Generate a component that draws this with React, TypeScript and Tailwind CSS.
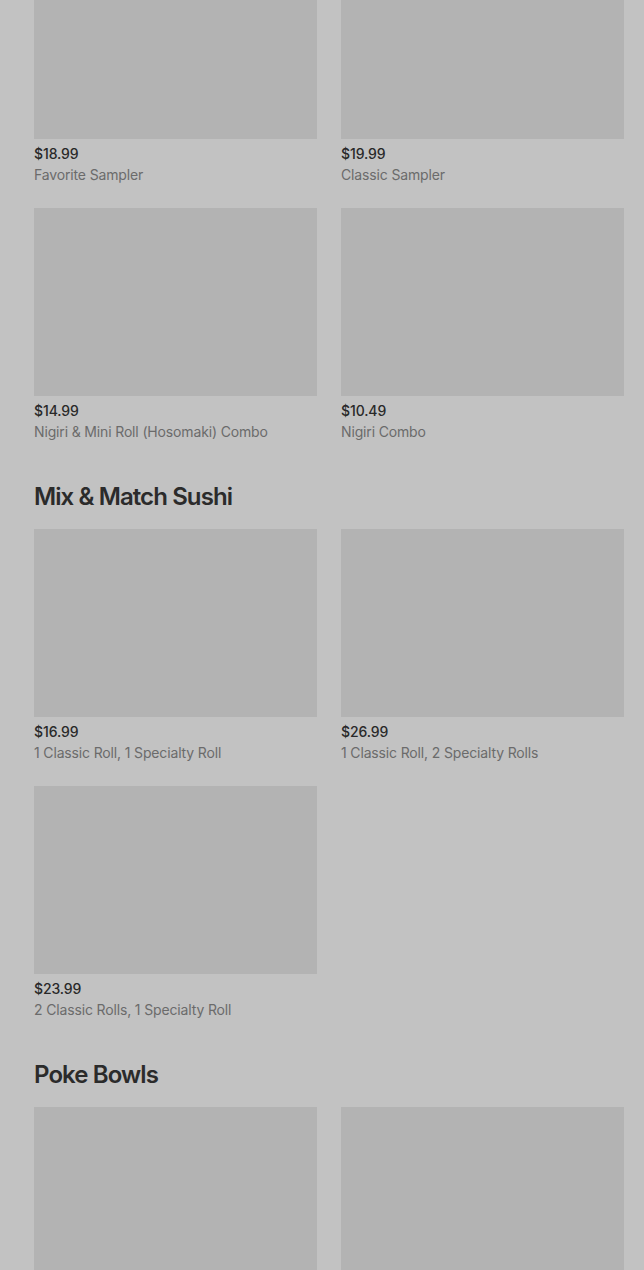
import React from "react";

type Item = { price: string; name: string };

const sections: { title?: string; items: Item[] }[] = [
  {
    items: [
      { price: "$18.99", name: "Favorite Sampler" },
      { price: "$19.99", name: "Classic Sampler" },
      { price: "$14.99", name: "Nigiri & Mini Roll (Hosomaki) Combo" },
      { price: "$10.49", name: "Nigiri Combo" },
    ],
  },
  {
    title: "Mix & Match Sushi",
    items: [
      { price: "$16.99", name: "1 Classic Roll, 1 Specialty Roll" },
      { price: "$26.99", name: "1 Classic Roll, 2 Specialty Rolls" },
      { price: "$23.99", name: "2 Classic Rolls, 1 Specialty Roll" },
    ],
  },
  {
    title: "Poke Bowls",
    items: [
      { price: "", name: "" },
      { price: "", name: "" },
    ],
  },
];

function Card({ item }: { item: Item }) {
  return (
    <div className="flex flex-col">
      <div className="h-[188px] bg-[#b3b3b3]" />
      <div className="pt-[5px] text-[14px] leading-[20px] font-medium tracking-[-0.1px] text-[#292929]">{item.price}</div>
      <div className="text-[14px] leading-[22px] tracking-[-0.15px] text-[#6b6b6b]">{item.name}</div>
    </div>
  );
}

export default function App() {
  return (
    <div
      className="w-[644px] h-[1270px] overflow-hidden bg-[#c2c2c2]"
      style={{ fontFamily: "Inter, 'Noto Sans', sans-serif" }}
    >
      <div className="-mt-[49px] pl-[34px] pr-[20px] flex flex-col gap-[38px]">
        {sections.map((s, i) => (
          <div key={i} className="flex flex-col gap-[16px]">
            {s.title && (
              <h2 className="text-[24px] leading-[32px] font-semibold tracking-[-0.9px] text-[#2b2b2b]">{s.title}</h2>
            )}
            <div className="grid grid-cols-2 gap-x-[24px] gap-y-[22px]">
              {s.items.map((it, j) => (
                <Card key={j} item={it} />
              ))}
            </div>
          </div>
        ))}
      </div>
    </div>
  );
}
